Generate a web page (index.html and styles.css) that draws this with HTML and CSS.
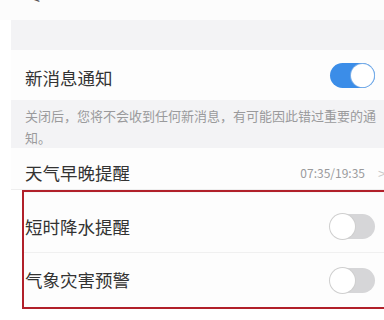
FILE: index.html
```html
<!DOCTYPE html>
<html lang="zh">
<head>
<meta charset="utf-8">
<link rel="stylesheet" href="styles.css">
</head>
<body>
<div class="screen">
  <div class="header">
    <span class="back">&lt;</span>
    <span class="title">天气消息提醒</span>
  </div>
  <div class="gap"></div>
  <div class="row row-main">
    <span class="label">新消息通知</span>
    <span class="toggle on"><span class="knob"></span></span>
  </div>
  <div class="desc">关闭后，您将不会收到任何新消息，有可能因此错过重要的通知。</div>
  <div class="row row-time">
    <span class="label">天气早晚提醒</span>
    <span class="value">07:35/19:35</span>
    <span class="chev">&gt;</span>
  </div>
  <div class="marked">
    <div class="row row-a">
      <span class="label">短时降水提醒</span>
      <span class="toggle"><span class="knob"></span></span>
    </div>
    <div class="row row-b">
      <span class="label">气象灾害预警</span>
      <span class="toggle"><span class="knob"></span></span>
    </div>
  </div>
</div>
</body>
</html>
```
FILE: styles.css
```css
html, body {
  margin: 0;
  padding: 0;
  background: #ffffff;
  overflow: hidden;
  width: 384px;
  height: 320px;
}
.screen {
  margin-left: 11px;
  width: 373px;
  font-family: "Noto Sans CJK SC", "Noto Sans", sans-serif;
  color: #333333;
}
.header {
  height: 20px;
  position: relative;
  overflow: hidden;
  background: #fcfcfc;
  margin-left: -11px;
}
.back {
  position: absolute;
  left: 30px;
  top: -16px;
  font-size: 18px;
  color: #555;
}
.title {
  position: absolute;
  left: 155px;
  top: -22px;
  font-size: 17.5px;
  line-height: 25px;
  color: #333;
}
.gap {
  height: 30px;
  background: #f3f3f5;
}
.row {
  display: flex;
  align-items: center;
  background: #fdfdfd;
  padding-left: 14px;
}
.label {
  font-size: 17.5px;
  line-height: 24px;
  flex: 1;
  color: #333;
}
.row-main {
  height: 50px;
  padding-bottom: 6px;
  box-sizing: border-box;
  padding-top: 6px;
}
.row-main .label {
  padding-top: 5px;
}
.toggle {
  width: 45px;
  height: 25px;
  border-radius: 13px;
  background: #d6d6d8;
  position: relative;
  margin-right: 9px;
  box-sizing: border-box;
}
.toggle .knob {
  position: absolute;
  left: 0;
  top: 0;
  width: 25px;
  height: 25px;
  border-radius: 50%;
  background: #ffffff;
  box-shadow: 0 0 0 1px #cfcfcf;
  box-sizing: border-box;
}
.toggle.on {
  background: #3b8de8;
}
.toggle.on .knob {
  left: 21px;
  width: 23px;
  height: 23px;
  top: 1px;
  box-shadow: 0 0 0 1px #7aaee8;
}
.desc {
  background: #f3f3f5;
  color: #9a9a9c;
  font-size: 13px;
  line-height: 22px;
  padding: 5px 0 0 14px;
  height: 48px;
  box-sizing: border-box;
}
.row-time {
  height: 42px;
  padding-top: 8px;
  border-bottom: 1px solid #eeeeee;
  box-sizing: border-box;
}
.value {
  font-size: 12px;
  color: #9a9a9c;
  margin-right: 13px;
}
.chev {
  font-size: 14px;
  color: #c8c8c8;
  width: 6px;
  overflow: visible;
  white-space: nowrap;
}
.marked {
  margin-left: 11px;
  border: 2px solid #b1202a;
  border-right: none;
}
.row-a {
  height: 61px;
  padding-left: 1px;
  padding-top: 8px;
  box-sizing: border-box;
  border-top: 1px solid #f6f6f6;
  border-bottom: 1px solid #f0f0f0;
}
.row-b {
  height: 54px;
  padding-left: 1px;
  box-sizing: border-box;
}
```
